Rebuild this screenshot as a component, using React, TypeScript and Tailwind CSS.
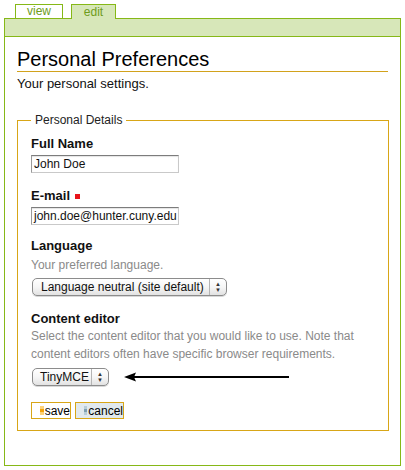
import React from 'react';

const green = 'border-[#86b817]';
const gold = 'border-[#d8a617]';

const PopupSelect = ({ label, width, textPad }: { label: string; width: string; textPad: string }) => (
  <div
    className={`flex h-[18px] ${width} items-stretch rounded-[5px] border border-[#8c8c8c] bg-gradient-to-b from-white via-[#f6f6f6] to-[#e2e2e2] text-[12px] leading-[16px] text-[#111] shadow-[0_1px_0_#d8d8d8]`}>
    <span className={`flex-1 ${textPad} whitespace-nowrap`}>{label}</span>
    <span className="flex w-[17px] flex-col items-center justify-center border-l border-[#b4b4b4] text-[6px] leading-[6px] text-[#333]">
      <span>▲</span>
      <span>▼</span>
    </span>
  </div>
);

const Marker = ({ light, dark }: { light: string; dark: string }) => (
  <span className="mr-[1px] flex w-[4px] flex-col">
    <span className={`h-[3px] ${light}`} />
    <span className={`h-[3px] ${dark}`} />
    <span className={`h-[3px] ${light}`} />
  </span>
);

export default function App() {
  return (
    <div className="min-h-[470px] bg-white px-[4px] pt-[4px] font-['Liberation_Sans',Arial,sans-serif] text-[#111]">
      <div className="ml-[11px] flex items-end gap-[8px]">
        <div className={`h-[14px] w-[48px] border border-b-0 ${green} bg-white text-center text-[12px] leading-[13px] text-[#6e9c1c]`}>
          view
        </div>
        <div className={`relative z-10 -mb-px h-[15px] w-[45px] border border-b-0 ${green} bg-[#d7e7b9] text-center text-[12px] leading-[14px] text-[#6e9c1c]`}>
          edit
        </div>
      </div>

      <div className={`h-[448px] w-[397px] border ${green}`}>
        <div className={`h-[18px] border-b ${green} bg-[#d7e7b9]`} />

        <div className="pl-[12px] pr-[12px]">
          <h1 className="mt-[10px] border-b border-[#d2a21c] text-[20px] font-normal leading-[24px] text-black">
            Personal Preferences
          </h1>
          <p className="mt-[4px] text-[13px] leading-[16px] text-[#111]">Your personal settings.</p>

          <fieldset className={`mt-[20px] w-[372px] border ${gold} px-[13px] pb-[11px]`}>
            <legend className="px-[4px] text-[12px] leading-[16px] text-[#222]">Personal Details</legend>

            <div className="mt-[8px] text-[13px] font-bold leading-[16px]">Full Name</div>
            <div className="mt-[3px] h-[18px] w-[148px] overflow-hidden border border-[#c9c9c9] border-t-[#7c7c7c] border-l-[#9a9a9a] bg-white pl-[2px] text-[12px] leading-[16px] whitespace-nowrap shadow-[inset_0_1px_1px_#e4e4e4]">
              John Doe
            </div>

            <div className="mt-[15px] flex items-center text-[13px] font-bold leading-[16px]">
              E-mail
              <span className="ml-[5px] mt-[1px] h-[5px] w-[5px] bg-[#e8141b]" />
            </div>
            <div className="mt-[3px] h-[18px] w-[148px] overflow-hidden border border-[#c9c9c9] border-t-[#7c7c7c] border-l-[#9a9a9a] bg-white pl-[2px] text-[12px] leading-[16px] whitespace-nowrap shadow-[inset_0_1px_1px_#e4e4e4]">
              john.doe@hunter.cuny.edu
            </div>

            <div className="mt-[13px] text-[13px] font-bold leading-[16px]">Language</div>
            <div className="mt-[3px] text-[12px] leading-[16px] text-[#8a8a8a]">Your preferred language.</div>
            <div className="mt-[5px] ml-[1px]">
              <PopupSelect label="Language neutral (site default)" width="w-[195px]" textPad="pl-[8px]" />
            </div>

            <div className="mt-[15px] text-[13px] font-bold leading-[16px]">Content editor</div>
            <div className="text-[12px] leading-[18px] text-[#8a8a8a]">
              Select the content editor that you would like to use. Note that
              <br />
              content editors often have specific browser requirements.
            </div>
            <div className="mt-[5px] ml-[1px] flex items-center">
              <PopupSelect label="TinyMCE" width="w-[77px]" textPad="pl-[7px]" />
              <svg className="ml-[15px]" width="166" height="12" viewBox="0 0 166 12">
                <path d="M0 6 L12 1.5 L10 6 L12 10.5 Z" fill="#000" />
                <line x1="9" y1="6" x2="165" y2="6" stroke="#000" strokeWidth="2" />
              </svg>
            </div>

            <div className="mt-[16px] flex gap-[4px]">
              <div className={`flex h-[17px] w-[40px] items-center border ${gold} bg-white pl-[8px] text-[12px] leading-[14px] text-black`}>
                <Marker light="bg-[#fcd27a]" dark="bg-[#f4a40c]" />
                save
              </div>
              <div className={`flex h-[17px] w-[49px] items-center border ${gold} bg-[#e1e9ee] pl-[8px] text-[12px] leading-[14px] text-black`}>
                <Marker light="bg-[#b8cdd8]" dark="bg-[#7e9fb0]" />
                cancel
              </div>
            </div>
          </fieldset>
        </div>
      </div>
    </div>
  );
}
